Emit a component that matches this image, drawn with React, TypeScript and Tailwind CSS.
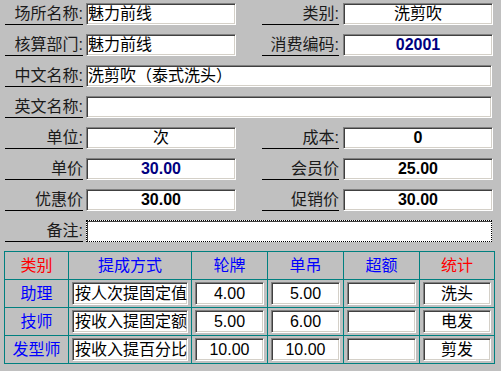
const sunken =
  "bg-white border border-t-[#808080] border-l-[#808080] border-r-white border-b-white shadow-[inset_1px_1px_0_#404040,inset_-1px_-1px_0_#d4d0c8]";

const Label = ({ text, w }: { text: string; w: string }) => (
  <div
    className={`${w} h-[22px] shrink-0 border-b border-black flex items-end justify-end text-[16px] leading-[20px] text-[#1a1a1a]`}
  >
    {text}
  </div>
);

const Field = ({
  value = "",
  className = "",
}: {
  value?: string;
  className?: string;
}) => (
  <div
    className={`${sunken} h-[22px] flex items-center px-[1px] text-[16px] leading-none whitespace-nowrap overflow-hidden ${className}`}
  >
    {value}
  </div>
);

const Row = ({
  l1,
  v1,
  c1 = "",
  l2,
  v2,
  c2 = "",
}: {
  l1: string;
  v1: string;
  c1?: string;
  l2: string;
  v2: string;
  c2?: string;
}) => (
  <div className="flex">
    <Label text={l1} w="w-[78px]" />
    <Field value={v1} className={`ml-[3px] w-[150px] ${c1}`} />
    <div className="ml-[26px]">
      <Label text={l2} w="w-[77px]" />
    </div>
    <Field value={v2} className={`ml-[4px] w-[150px] ${c2}`} />
  </div>
);

const Wide = ({ l, v = "" }: { l: string; v?: string }) => (
  <div className="flex">
    <Label text={l} w="w-[78px]" />
    <Field value={v} className="ml-[3px] w-[406px]" />
  </div>
);

const num = "justify-center font-bold text-[14px]";

const rows = [
  ["助理", "按人次提固定值", "4.00", "5.00", "", "洗头"],
  ["技师", "按收入提固定额", "5.00", "6.00", "", "电发"],
  ["发型师", "按收入提百分比", "10.00", "10.00", "", "剪发"],
];

const Cell = ({ v, center = true }: { v: string; center?: boolean }) => (
  <div
    className={`${sunken} h-[23px] mx-[3px] flex items-center px-[2px] text-[16px] leading-none whitespace-nowrap overflow-hidden ${
      center ? "justify-center" : ""
    }`}
  >
    {v}
  </div>
);

export default function App() {
  return (
    <div className="w-[501px] h-[371px] bg-[#c0c0c0] font-['Liberation_Sans','Noto_Sans_CJK_SC',sans-serif] text-black overflow-hidden">
      <div className="flex flex-col gap-[9px] pt-[3px] pl-[5px]">
        <Row l1="场所名称:" v1="魅力前线" l2="类别:" v2="洗剪吹" c2="justify-center" />
        <Row
          l1="核算部门:"
          v1="魅力前线"
          l2="消费编码:"
          v2="02001"
          c2={`${num} text-[#000080]`}
        />
        <Wide l="中文名称:" v="洗剪吹（泰式洗头）" />
        <Wide l="英文名称:" />
        <Row l1="单位:" v1="次" c1="justify-center" l2="成本:" v2="0" c2={num} />
        <Row
          l1="单价"
          v1="30.00"
          c1={`${num} text-[#000080]`}
          l2="会员价"
          v2="25.00"
          c2={num}
        />
        <Row l1="优惠价" v1="30.00" c1={num} l2="促销价" v2="30.00" c2={num} />
        <div className="flex">
          <Label text="备注:" w="w-[78px]" />
          <div className="ml-[3px] w-[406px] h-[22px] bg-white border border-dotted border-black shadow-[inset_1px_1px_0_#404040]" />
        </div>
      </div>

      <table className="mt-[9px] ml-[4px] w-[490px] table-fixed border-collapse border border-[#008080] text-[16px]">
        <colgroup>
          <col className="w-[64px]" />
          <col className="w-[123px]" />
          <col className="w-[76px]" />
          <col className="w-[76px]" />
          <col className="w-[76px]" />
          <col className="w-[75px]" />
        </colgroup>
        <thead>
          <tr className="h-[28px]">
            <th className="border border-[#008080] font-normal text-[#ff0000]">类别</th>
            <th className="border border-[#008080] font-normal text-[#0000ff]">提成方式</th>
            <th className="border border-[#008080] font-normal text-[#0000ff]">轮牌</th>
            <th className="border border-[#008080] font-normal text-[#0000ff]">单吊</th>
            <th className="border border-[#008080] font-normal text-[#0000ff]">超额</th>
            <th className="border border-[#008080] font-normal text-[#ff0000]">统计</th>
          </tr>
        </thead>
        <tbody>
          {rows.map((r) => (
            <tr key={r[0]} className="h-[28px]">
              <td className="border border-[#008080] text-center text-[#0000ff] p-0">{r[0]}</td>
              <td className="border border-[#008080] p-0">
                <Cell v={r[1]} center={false} />
              </td>
              {r.slice(2).map((v, i) => (
                <td key={i} className="border border-[#008080] p-0">
                  <Cell v={v} />
                </td>
              ))}
            </tr>
          ))}
        </tbody>
      </table>
    </div>
  );
}
